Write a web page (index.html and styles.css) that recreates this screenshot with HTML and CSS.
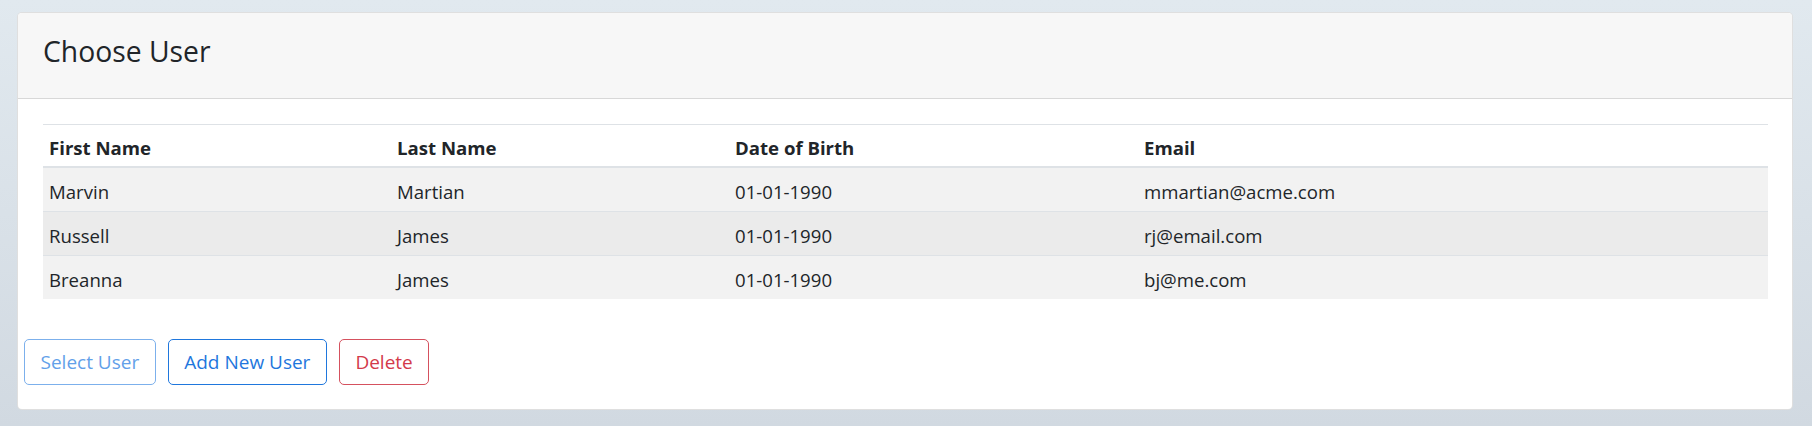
FILE: index.html
```html
<!DOCTYPE html>
<html lang="en">
<head>
<meta charset="utf-8">
<title>Choose User</title>
<link rel="stylesheet" href="styles.css">
</head>
<body>
<div class="card">
  <div class="card-header">
    <h3 class="title">Choose User</h3>
  </div>
  <div class="card-body">
    <table class="users">
      <thead>
        <tr>
          <th class="c1">First Name</th>
          <th class="c2">Last Name</th>
          <th class="c3">Date of Birth</th>
          <th class="c4">Email</th>
        </tr>
      </thead>
      <tbody>
        <tr class="odd"><td>Marvin</td><td>Martian</td><td>01-01-1990</td><td>mmartian@acme.com</td></tr>
        <tr class="even"><td>Russell</td><td>James</td><td>01-01-1990</td><td>rj@email.com</td></tr>
        <tr class="odd"><td>Breanna</td><td>James</td><td>01-01-1990</td><td>bj@me.com</td></tr>
      </tbody>
    </table>
  </div>
  <div class="actions">
    <button class="btn btn-primary disabled" type="button">Select User</button>
    <button class="btn btn-primary" type="button">Add New User</button>
    <button class="btn btn-danger" type="button">Delete</button>
  </div>
</div>
</body>
</html>
```
FILE: styles.css
```css
html, body {
  height: 100%;
}
body {
  margin: 0;
  background: linear-gradient(180deg, #e1e9ef 0%, #d1d9e1 100%);
  font-family: "Open Sans", "Noto Sans", Arial, sans-serif;
  color: #212529;
  font-size: 18.6px;
  padding-top: 12px;
  box-sizing: border-box;
}
.card {
  margin: 0 19px 0 17px;
  background: #fff;
  border: 1px solid rgba(0, 0, 0, 0.125);
  border-radius: 5px;
  height: 398px;
  box-sizing: border-box;
  overflow: hidden;
}
.card-header {
  background: #f7f7f7;
  border-bottom: 1px solid rgba(0, 0, 0, 0.125);
  height: 86px;
  box-sizing: border-box;
  padding: 19px 25px 0;
}
.title {
  margin: 0;
  font-weight: 400;
  font-size: 28.3px;
  line-height: 38px;
  color: #212529;
}
.card-body {
  padding: 25px 24px 0 25px;
}
.users {
  width: 100%;
  border-collapse: collapse;
}
.users th,
.users td {
  text-align: left;
  padding: 4px 6px 0;
  vertical-align: middle;
}
.users th {
  font-weight: 700;
  height: 37px;
  border-top: 1px solid #dee2e6;
  border-bottom: 2px solid #dee2e6;
}
.users td {
  height: 39px;
  border-top: 1px solid #dee2e6;
}
.users .c1 { width: 336px; }
.users .c2 { width: 326px; }
.users .c3 { width: 397px; }
.users tr.odd td { background: #f2f2f2; }
.users tr.even td { background: #ebebeb; }
.actions {
  display: flex;
  gap: 12px;
  padding: 40px 6px 0;
}
.btn {
  font-family: inherit;
  font-size: 19px;
  line-height: 26px;
  height: 46px;
  padding: 0 15.5px;
  background: #fff;
  border: 1px solid;
  border-radius: 5px;
  cursor: pointer;
}
.btn-primary {
  color: #1f77dd;
  border-color: #1f77dd;
}
.btn-primary.disabled {
  color: #62a0e9;
  border-color: #7cb0ec;
}
.btn-danger {
  color: #d33a4a;
  border-color: #d5515e;
}
```
